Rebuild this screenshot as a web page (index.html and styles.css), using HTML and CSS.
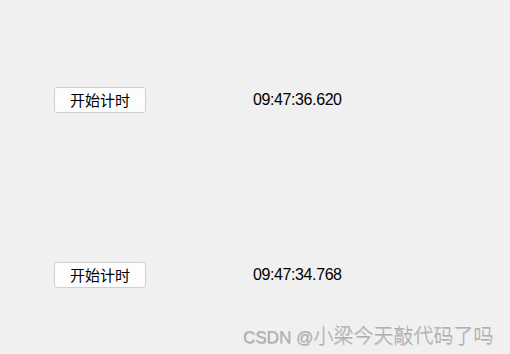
FILE: index.html
```html
<!DOCTYPE html>
<html lang="zh-CN">
<head>
<meta charset="utf-8">
<link rel="stylesheet" href="styles.css">
</head>
<body>
<div class="window">
  <div class="row row-first">
    <button class="btn">开始计时</button>
    <span class="time">09:47:36.620</span>
  </div>
  <div class="row row-second">
    <button class="btn">开始计时</button>
    <span class="time">09:47:34.768</span>
  </div>
  <div class="watermark"><span class="wm-latin">CSDN @</span>小梁今天敲代码了吗</div>
</div>
</body>
</html>
```
FILE: styles.css
```css
html, body {
  margin: 0;
  padding: 0;
  background: #f0f0f0;
}
.window {
  position: relative;
  width: 510px;
  height: 354px;
  overflow: hidden;
  font-family: "Noto Sans CJK SC", "Liberation Sans", sans-serif;
}
.row {
  display: flex;
  align-items: center;
  height: 26px;
  padding-left: 54px;
}
.row-first {
  padding-top: 87px;
}
.row-second {
  margin-top: 149px;
}
.btn {
  box-sizing: border-box;
  width: 92px;
  height: 26px;
  margin: 0;
  padding: 0;
  background: #fdfdfd;
  border: 1px solid #d0d0d0;
  border-radius: 3px;
  font-family: "Noto Sans CJK SC", sans-serif;
  font-size: 15px;
  line-height: 24px;
  color: #000;
}
.time {
  margin-left: 107px;
  font-family: "Liberation Sans", sans-serif;
  font-size: 16px;
  letter-spacing: -0.4px;
  color: #000;
}
.watermark {
  position: absolute;
  left: 243px;
  top: 322px;
  font-size: 20px;
  font-weight: 300;
  line-height: 26px;
  color: #b0b0b0;
  text-shadow: 0.5px 0.5px 0.5px rgba(0, 0, 0, 0.2);
  white-space: nowrap;
}
.wm-latin {
  font-family: "Liberation Sans", sans-serif;
  font-size: 17px;
  font-weight: 400;
}
```
